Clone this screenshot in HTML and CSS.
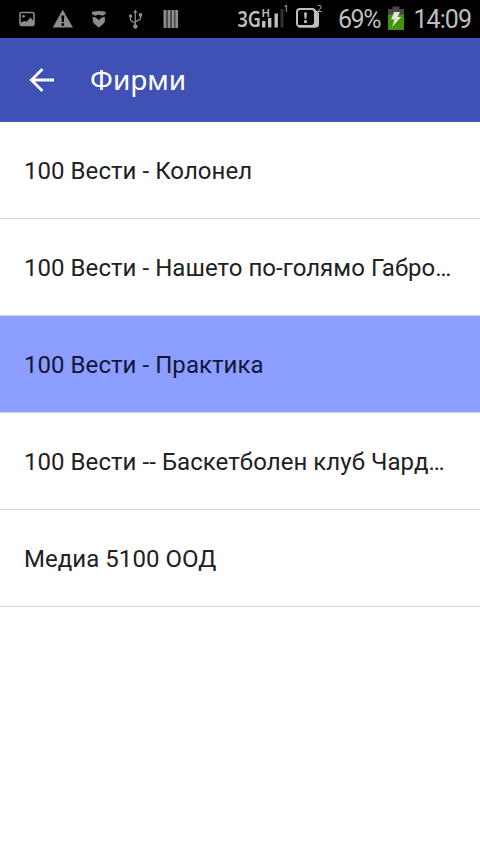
FILE: index.html
```html
<!DOCTYPE html>
<html lang="bg">
<head>
<meta charset="utf-8">
<title>Фирми</title>
<link rel="stylesheet" href="styles.css">
</head>
<body>
<div class="status">
  <svg class="notifications" width="200" height="38" viewBox="0 0 200 38" fill="#8c8c8c">
    <rect x="20" y="12.500" width="14" height="13" rx="1.500" fill="none" stroke="#8c8c8c" stroke-width="1.600"/>
    <circle cx="23.500" cy="16.300" r="1.400"/>
    <path d="M20.500 22.500l4-1.500 2 .7 4-4.200 3.500 3.700V25.500H20.500z"/>
    <path fill-rule="evenodd" d="M62.700 9.700L73 27.500H52.700zM61.300 15.500l.5 6.500h2l.5-6.500zM61.500 23.200v2.500h2.600v-2.500z"/>
    <path d="M92 11.800q6.800-1.800 13.600 0V14l-3.300 1.800q-2-1-3.500-1T95.300 15.800L92 14z"/>
    <path d="M92.700 16.700l3.300.8 2.800 2.700 2.800-2.700 3.300-.8V21.500q-1 2.500-6.100 6-5.100-3.500-6.100-6z"/>
    <path d="M135.300 12v14M130.500 16.500v3q0 1.200 1.100 1.700l3.700 2M140.500 15.500v2.800q0 1-1.200 1.600l-4 1.800" fill="none" stroke="#8c8c8c" stroke-width="1.300"/>
    <path d="M135.300 9.300l2 3.500h-4zM138.800 13.300h3.300v3.300h-3.300z"/>
    <circle cx="130.500" cy="16" r="1.700"/><circle cx="135.300" cy="26.500" r="2.300"/>
    <path d="M163.500 10h3v18h-3zM167.600 10h3v18h-3zM171.600 10h2.600v18h-2.600zM175.200 10h2.900v18h-2.900z"/>
    <path fill="#555" d="M166.500 10h1.100v18h-1.100zM170.600 10h1v18h-1zM174.200 10h1v18h-1z"/>
  </svg>
  <svg class="system" width="250" height="38" viewBox="230 0 250 38" fill="#bebebe">
    <g class="signal">
      <text x="237.500" y="27" font-size="21.500" textLength="23.500" lengthAdjust="spacingAndGlyphs">3G</text>
      <text x="261.500" y="16.500" font-size="11" textLength="8.500" lengthAdjust="spacingAndGlyphs">H</text>
      <path d="M262 21h3.400v6.500H262zM268 18h3.400v9.500H268zM274.500 13.500h3.400v14h-3.400z"/>
      <path fill="#303030" d="M280.500 9h3v18.500h-3z"/>
      <text class="index" x="283.500" y="12">1</text>
      <path d="M300 9h13l5 5v9.500a3 3 0 0 1-3 3h-15a3 3 0 0 1-3-3V12a3 3 0 0 1 3-3z" fill="none" stroke="#bebebe" stroke-width="2"/>
      <path d="M312.500 8.500h1.500l5 4.500V24q0 3.500-3.500 3.500H299L297.500 25H311q3 0 3-3V13q0-3-1.500-4.500z"/>
      <path d="M304 12.500h3l-.6 6.300h-1.800zM304.100 20.200h2.800v2.800h-2.800z"/>
      <text class="index" x="317" y="12">2</text>
    </g>
    <text class="figures" x="338" y="28" textLength="43.500">69%</text>
    <path fill="#484848" d="M392.500 6.500h7V9h4.500v6H388V9h4.500z"/>
    <path fill="#429508" d="M388 14.500h16V30h-16z"/>
    <path fill="#e1e5de" d="M394 12h6l-2.500 5h3.700l-9 10 2.300-7.500h-3.300z"/>
    <text class="figures" x="413.500" y="28" textLength="58.500">14:09</text>
  </svg>
</div>
<header class="toolbar">
  <svg class="back" width="26" height="26" viewBox="0 0 26 26"><path d="M25 13H3M13.500 1.900L2.400 13l11.100 11.100" fill="none" stroke="#fff" stroke-width="2.800"/></svg>
  <h1>Фирми</h1>
</header>
<ul class="list">
  <li>100 Вести - Колонел</li>
  <li>100 Вести - Нашето по-голямо Габро…</li>
  <li class="selected">100 Вести - Практика</li>
  <li>100 Вести -- Баскетболен клуб Чард…</li>
  <li>Медиа 5100 ООД</li>
</ul>
</body>
</html>
```
FILE: styles.css
```css
body {
  margin: 0;
  min-height: 854px;
  background: #fff;
  color: #212121;
  font-family: Roboto, sans-serif;
}
svg { display: block; flex: none; }
.status {
  display: flex;
  justify-content: space-between;
  height: 38px;
  background: #000;
}
.signal { font-family: "Noto Sans", sans-serif; font-weight: 600; }
.index { font-size: 9px; font-weight: 400; }
.figures { font-size: 25px; }
.toolbar {
  display: flex;
  align-items: center;
  gap: 35px;
  height: 84px;
  padding-left: 29px;
  box-sizing: border-box;
  background: #3f51b5;
  color: #fff;
}
.toolbar h1 {
  margin: 0;
  padding-bottom: 2px;
  font: 400 28px/38px "Noto Sans", sans-serif;
}
.list { margin: 0; padding: 0; list-style: none; }
.list li {
  height: 97px;
  padding: 1px 24px 0;
  box-sizing: border-box;
  border-bottom: 1px solid #d6d6d6;
  font-size: 24px;
  line-height: 97px;
  letter-spacing: 0.05px;
  white-space: nowrap;
}
.list .selected { background: #8c9eff; color: #12163a; }
```
